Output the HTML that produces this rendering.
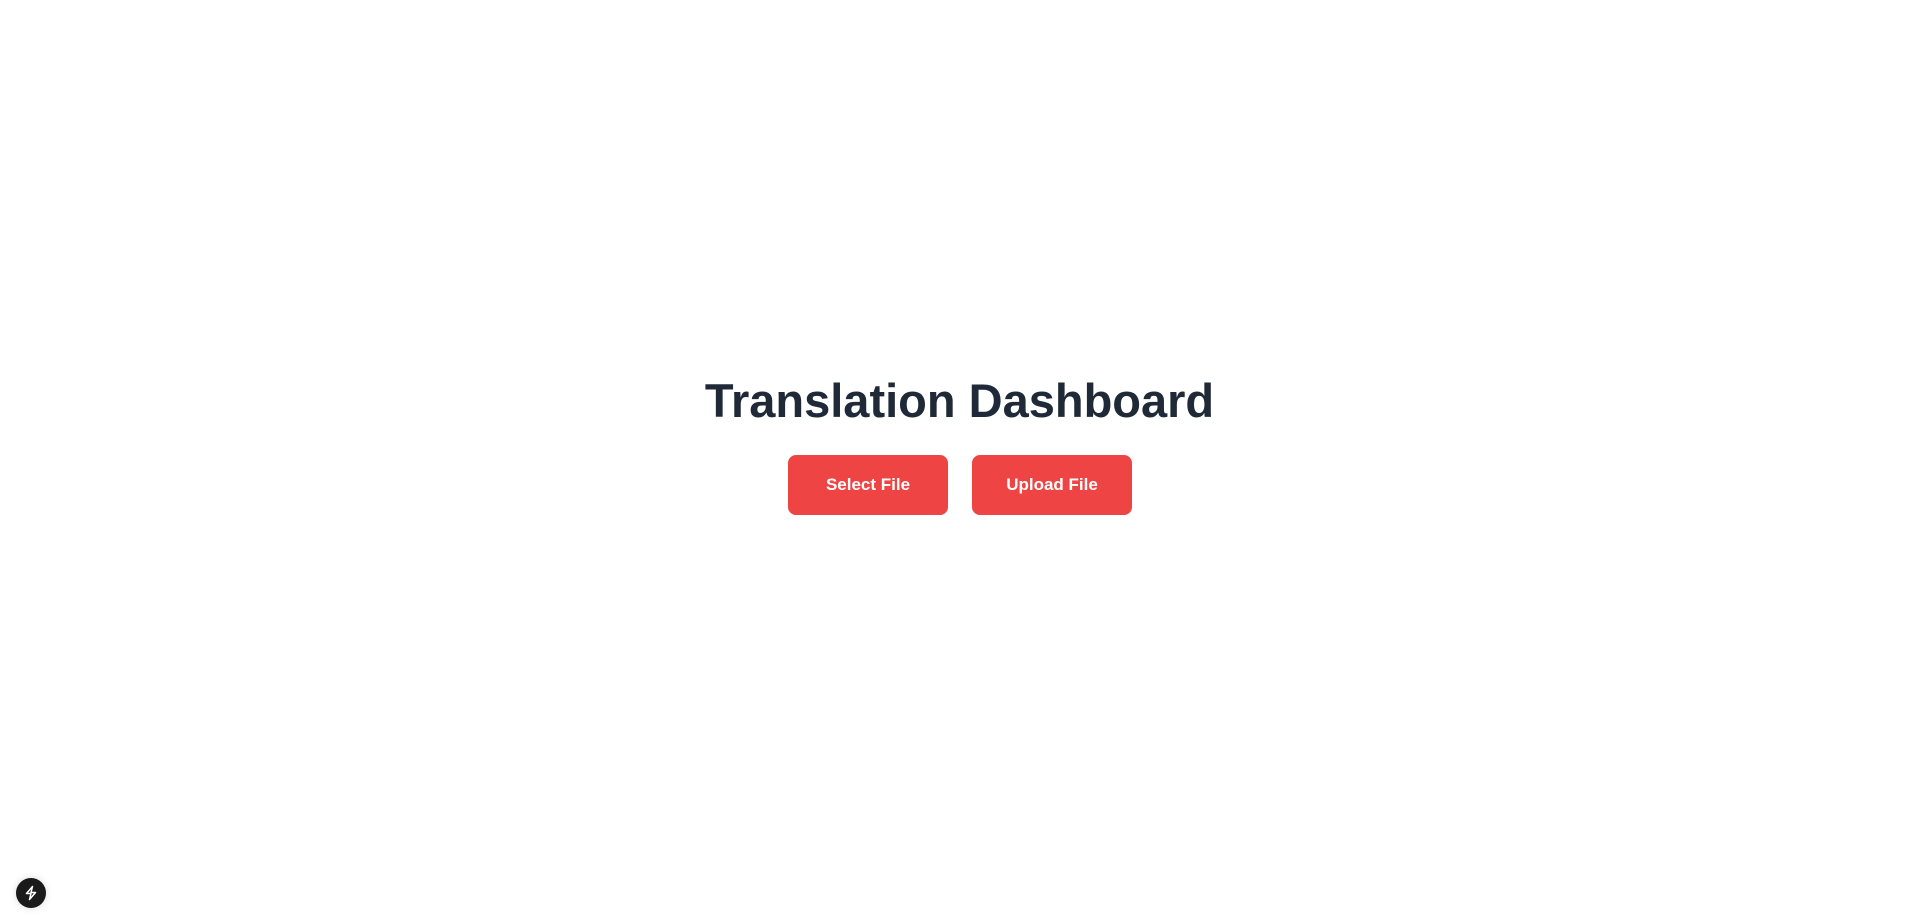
<!DOCTYPE html>
<html><head><style>
html,body{margin:0;width:1919px;height:918px;background:#fff;overflow:hidden;font-family:"Liberation Sans",sans-serif;}
h1{position:absolute;left:0;width:1919px;top:373px;margin:0;text-align:center;font-size:47px;line-height:56px;font-weight:700;color:#1f2937;}
.b{position:absolute;top:455px;width:160px;height:60px;background:#ef4444;border-radius:8px;color:#fff;font-weight:700;font-size:17px;line-height:60px;text-align:center;}
.i{position:absolute;left:16px;top:878px;width:30px;height:30px;border-radius:50%;background:#1a1a1a;box-shadow:0 0 8px rgba(0,0,0,.15);}
</style></head><body>
<h1>Translation Dashboard</h1>
<div class="b" style="left:788px">Select File</div>
<div class="b" style="left:972px">Upload File</div>
<div class="i"><svg width="30" height="30" viewBox="0 0 30 30"><path d="M16.5 8.5 L10.5 15.5 H15 L13.5 21.5 L19.5 14.5 H15 Z" fill="none" stroke="#fff" stroke-width="1.5" stroke-linejoin="round"/></svg></div>
</body></html>
